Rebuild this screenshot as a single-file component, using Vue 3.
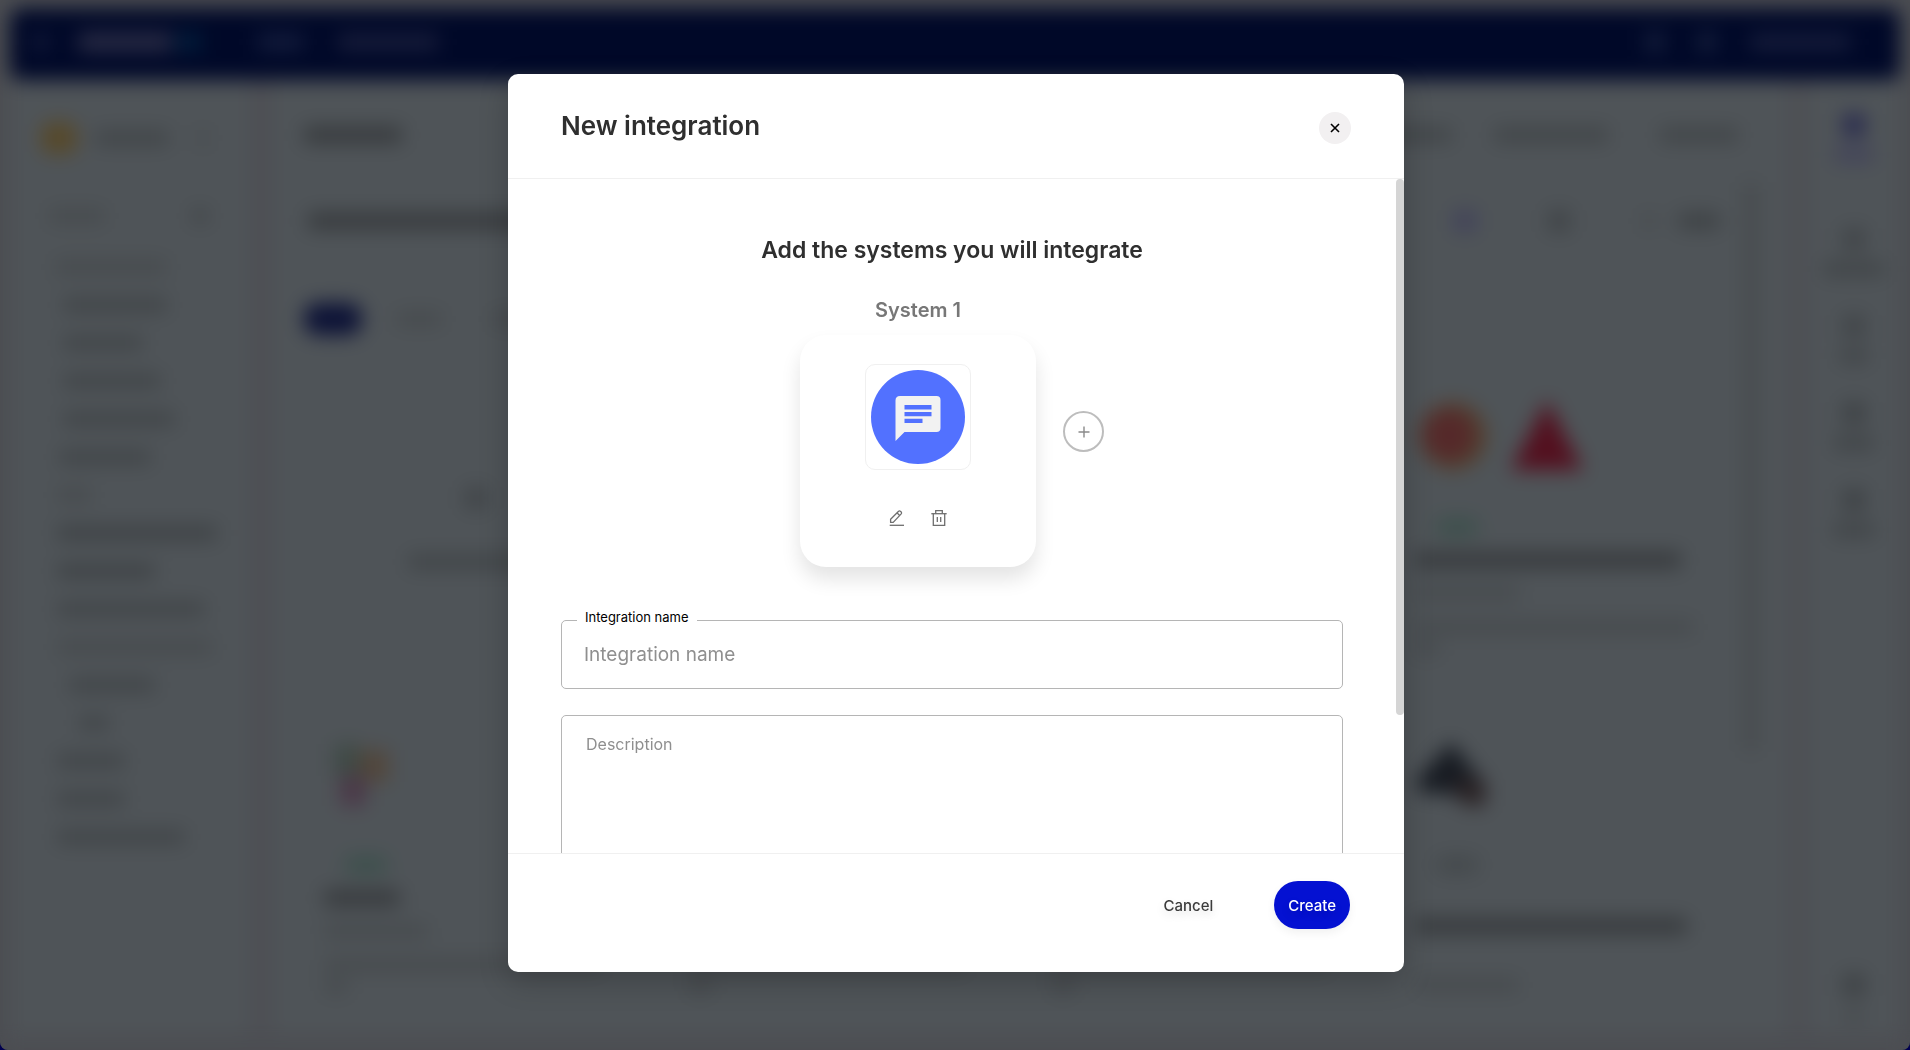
<script setup>
import { ref } from 'vue'

const name = ref('')
const description = ref('')

// Sidebar placeholder rows: indent, width, tone
const menu = [
  { x: 14, w: 112, t: 'soft' },
  { x: 22, w: 104, t: 'mid' },
  { x: 22, w: 80, t: 'mid' },
  { x: 22, w: 98, t: 'mid' },
  { x: 22, w: 112, t: 'mid' },
  { x: 18, w: 92, t: 'mid' },
  { x: 16, w: 34, t: 'soft' },
  { x: 16, w: 160, t: 'dark' },
  { x: 16, w: 98, t: 'dark' },
  { x: 16, w: 148, t: 'mid' },
  { x: 16, w: 156, t: 'soft' },
  { x: 28, w: 86, t: 'mid' },
  { x: 38, w: 30, t: 'mid' },
  { x: 16, w: 68, t: 'mid' },
  { x: 16, w: 68, t: 'mid' },
  { x: 16, w: 128, t: 'mid' },
]

const rail = [
  { w: 40, t: 'blue' },
  { w: 62, t: 'mid' },
  { w: 28, t: 'mid' },
  { w: 40, t: 'dark' },
  { w: 42, t: 'dark' },
]

const cards = [
  { kind: 'blank' },
  { kind: 'item', art: 'none', tag: 'green', title: 240 },
  { kind: 'item', art: 'none', tag: 'green', title: 240 },
  { kind: 'item', art: 'alerts', tag: 'green', title: 266 },
  { kind: 'item', art: 'petals', tag: 'green', title: 76 },
  { kind: 'item', art: 'none', tag: 'green', title: 200 },
  { kind: 'item', art: 'none', tag: 'green', title: 200 },
  { kind: 'item roomy', art: 'bird', tag: 'grey', title: 272 },
]
</script>

<template>
  <div class="app">
    <div class="backdrop" aria-hidden="true">
      <div class="scene">
        <div class="topbar">
          <i class="dot"></i>
          <i class="logo"></i>
          <i class="logo-mark"></i>
          <i class="nav-item"></i>
          <i class="nav-item wide"></i>
          <span class="grow"></span>
          <i class="nav-icon"></i>
          <i class="nav-icon"></i>
          <i class="nav-item user"></i>
        </div>
        <div class="columns">
          <div class="panel sidebar">
            <div class="workspace">
              <i class="avatar"></i>
              <i class="bar mid workspace-name"></i>
              <i class="bar soft chevron"></i>
            </div>
            <div class="search">
              <i class="bar soft search-text"></i>
              <i class="bar mid search-icon"></i>
            </div>
            <div class="menu">
              <div v-for="(m, i) in menu" :key="i" class="menu-row">
                <i class="bar" :class="m.t" :style="{ width: m.w + 'px', marginLeft: m.x + 'px' }"></i>
              </div>
            </div>
          </div>

          <div class="panel main">
            <div class="heading">
              <i class="bar strong heading-title"></i>
              <span class="grow"></span>
              <i class="bar mid tab"></i>
              <i class="bar mid tab long"></i>
              <i class="bar mid tab"></i>
            </div>
            <div class="toolbar">
              <i class="bar strong toolbar-title"></i>
              <span class="grow"></span>
              <i class="bar violet square"></i>
              <i class="bar mid square filter"></i>
              <i class="bar soft square"></i>
              <i class="bar dark action"></i>
            </div>
            <div class="chips">
              <i class="chip"></i>
              <i class="bar soft chip-text"></i>
              <i class="bar soft chip-text"></i>
            </div>
            <div class="cards">
              <div v-for="(c, i) in cards" :key="i" class="card" :class="c.kind">
                <template v-if="c.kind === 'blank'">
                  <i class="bar mid square"></i>
                  <i class="bar mid blank-text"></i>
                </template>
                <template v-else>
                  <div class="art">
                    <svg v-if="c.art === 'alerts'" width="176" height="68" viewBox="0 0 176 68">
                      <circle cx="38" cy="32" r="34" fill="#53412e" />
                      <circle cx="34" cy="31" r="26" fill="#55292a" />
                      <path d="M132 -4L168 66H96Z" fill="#53101f" />
                    </svg>
                    <svg v-else-if="c.art === 'petals'" width="80" height="68" viewBox="0 0 80 68">
                      <path d="M10 2H36V34H10Z" fill="#3f4a46" />
                      <path d="M36 8H64V40H36Z" fill="#52463a" />
                      <path d="M16 34H42V64H16Z" fill="#4b3848" />
                    </svg>
                    <svg v-else-if="c.art === 'bird'" width="80" height="68" viewBox="0 0 80 68">
                      <path d="M2 38L36 0L72 46L60 62L34 52L4 50Z" fill="#171b22" />
                      <path d="M36 38H70V64H50Z" fill="#2a2224" />
                    </svg>
                  </div>
                  <i class="tag" :class="c.tag"></i>
                  <i class="bar strong card-title" :style="{ width: c.title + 'px' }"></i>
                  <i class="bar soft card-sub"></i>
                  <i class="bar soft card-text"></i>
                  <i class="bar soft card-end"></i>
                </template>
              </div>
            </div>
          </div>
          <div class="gutter"><i></i></div>
          <div class="panel rail">
            <div v-for="(r, i) in rail" :key="i" class="rail-item">
              <i class="bar square" :class="r.t"></i>
              <i class="bar" :class="r.t === 'blue' ? 'violet' : 'mid'" :style="{ width: r.w + 'px' }"></i>
            </div>
            <span class="grow"></span>
            <div class="rail-item last">
              <i class="bar dark square"></i>
              <i class="bar soft rail-foot"></i>
            </div>
          </div>
        </div>
      </div>
    </div>

    <div class="overlay">
      <section class="modal" role="dialog" aria-modal="true" aria-labelledby="modal-title">
        <header class="modal-header">
          <h1 id="modal-title">New integration</h1>
          <button type="button" class="close" aria-label="Close">
            <svg width="10" height="10" viewBox="0 0 10 10">
              <path d="M1 1L9 9M9 1L1 9" stroke="#000" stroke-width="1.6" fill="none" />
            </svg>
          </button>
        </header>

        <div class="modal-body">
          <div class="content">
            <h2>Add the systems you will integrate</h2>
            <div class="systems">
              <div class="system">
                <h3>System 1</h3>
                <div class="system-card">
                  <div class="thumb">
                    <svg width="94" height="94" viewBox="0 0 94 94">
                      <circle cx="47" cy="47" r="47" fill="#5271ff" />
                      <path
                        d="M29 26H65.500Q69.500 26 69.500 30V58Q69.500 62 65.500 62H33.500L24.500 71V30.500Q24.500 26 29 26Z"
                        fill="#f2f2f2"
                      />
                      <path d="M33.500 35H60.500V39.500H33.500ZM33.500 42H60.500V46.300H33.500ZM33.500 48.700H51.500V53H33.500Z" fill="#5271ff" />
                    </svg>
                  </div>
                  <div class="tools">
                    <button type="button" class="tool" aria-label="Edit system">
                      <svg width="16" height="16" viewBox="0 0 16 16" fill="none" stroke="#6e6e6e" stroke-width="1.3">
                        <path d="M0.700 15.300H15" />
                        <path d="M1.600 12.400V9.300L9.600 1.300Q10.600 0.500 11.600 1.400L12.200 2Q13 3 12.200 3.900L4.200 12.400Z" stroke-linejoin="round" />
                        <path d="M8.200 3L10.700 5.500" />
                      </svg>
                    </button>
                    <button type="button" class="tool" aria-label="Remove system">
                      <svg width="16" height="16" viewBox="0 0 16 16" fill="none" stroke="#6e6e6e" stroke-width="1.300">
                        <path d="M0.300 3.700H15.700" />
                        <path d="M4.700 3.700V0.700H11.300V3.700" />
                        <path d="M2.300 3.700V15.300H13.700V3.700" />
                        <path d="M6.300 7V12M9.700 7V12" />
                      </svg>
                    </button>
                  </div>
                </div>
              </div>
              <button type="button" class="add" aria-label="Add system">
                <svg width="12" height="12" viewBox="0 0 12 12">
                  <path d="M6 0.500V11.500M0.500 6H11.500" stroke="#8a8a8a" stroke-width="1.400" fill="none" />
                </svg>
              </button>
            </div>

            <div class="field">
              <label for="integration-name">Integration name</label>
              <input id="integration-name" v-model="name" type="text" placeholder="Integration name" />
            </div>
            <textarea v-model="description" aria-label="Description" placeholder="Description"></textarea>
          </div>
          <div class="track"><div class="thumb-bar"></div></div>
        </div>

        <footer class="modal-footer">
          <button type="button" class="cancel">Cancel</button>
          <button type="button" class="create">Create</button>
        </footer>
      </section>
    </div>
  </div>
</template>

<style>
body {
  background: #00004f;
}
</style>

<style scoped>
* {
  box-sizing: border-box;
}
.app {
  min-height: 100vh;
  font-family: Inter, "Liberation Sans", sans-serif;
  color: #2f2f2f;
}
button {
  font-family: inherit;
  border: 0;
  padding: 0;
  background: none;
  cursor: pointer;
}
h1,
h2,
h3 {
  margin: 0;
  font-weight: 600;
}
svg {
  display: block;
  overflow: visible;
}
.grow {
  flex: 1;
}

/* Blurred page behind the dialog */
.backdrop {
  position: fixed;
  inset: 0;
  overflow: hidden;
  border-radius: 0 0 8px 8px;
  background: #4b4d51;
}
.scene {
  height: 100%;
  padding: 8px 10px 0;
  display: flex;
  flex-direction: column;
  background: #4d4f54;
  filter: blur(10px);
}
.scene i {
  display: block;
  flex: none;
}
.topbar {
  height: 72px;
  flex: none;
  border-radius: 10px;
  background: #000828;
  display: flex;
  align-items: center;
  padding: 0 50px 4px 24px;
}
.dot {
  width: 14px;
  height: 14px;
  background: #1a2140;
}
.logo {
  width: 94px;
  height: 18px;
  margin-left: 30px;
  background: #2b2d46;
}
.logo-mark {
  width: 26px;
  height: 18px;
  margin-left: 4px;
  background: #021e3c;
}
.nav-item {
  width: 46px;
  height: 14px;
  margin-left: 56px;
  background: #172040;
}
.nav-item.wide {
  width: 100px;
  margin-left: 34px;
  background: #1c213e;
}
.nav-item.user {
  width: 100px;
  margin-left: 0;
  background: #1a203e;
}
.nav-icon {
  width: 18px;
  height: 18px;
  margin-right: 34px;
  background: #17213e;
}
.columns {
  flex: 1;
  min-height: 0;
  display: flex;
  padding-bottom: 16px;
}
.panel {
  background: #4f5458;
  border-radius: 10px;
}
.bar {
  height: 14px;
  border-radius: 4px;
}
.soft {
  background: #464a4d;
}
.mid {
  background: #404447;
}
.dark {
  background: #3d4144;
}
.strong {
  background: #36393c;
}
.blue {
  background: #26284e;
}
.violet {
  background: #41425a;
}
.square {
  width: 22px;
  height: 22px;
}
.sidebar {
  width: 240px;
  flex: none;
  margin-right: 22px;
  padding: 42px 20px 0 31px;
}
.workspace {
  height: 32px;
  display: flex;
  align-items: center;
}
.avatar {
  width: 36px;
  height: 32px;
  border-radius: 10px;
  background: #57492a;
}
.workspace-name {
  width: 74px;
  margin-left: 18px;
}
.chevron {
  width: 12px;
  margin-left: 28px;
}
.search {
  height: 20px;
  margin-top: 52px;
  display: flex;
  align-items: center;
  justify-content: space-between;
  padding: 0 22px 0 8px;
}
.search-text {
  width: 56px;
}
.search-icon {
  width: 16px;
}
.menu {
  margin-top: 22px;
}
.menu-row {
  height: 38px;
  display: flex;
  align-items: center;
}
.main {
  flex: 1;
  min-width: 0;
  overflow: hidden;
  padding: 46px 50px 0 32px;
}
.heading,
.toolbar,
.chips {
  display: flex;
  align-items: center;
  height: 18px;
}
.heading-title {
  width: 98px;
  height: 16px;
}
.tab {
  width: 78px;
  margin-left: 52px;
}
.tab.long {
  width: 114px;
  margin-left: 42px;
}
.toolbar {
  margin-top: 68px;
  padding: 0 18px 0 4px;
}
.toolbar-title {
  width: 220px;
  height: 16px;
}
.filter {
  margin-left: 72px;
}
.toolbar .soft {
  width: 14px;
  height: 14px;
  margin-left: 72px;
}
.action {
  width: 42px;
  height: 16px;
  margin-left: 22px;
}
.chips {
  margin-top: 80px;
}
.chip {
  width: 58px;
  height: 32px;
  border-radius: 14px;
  background: #0c1236;
}
.chip-text {
  width: 46px;
  margin-left: 34px;
}
.chip-text + .chip-text {
  margin-left: 50px;
}
.cards {
  margin-top: 42px;
  display: grid;
  grid-template-columns: repeat(4, minmax(0, 1fr));
  column-gap: 20px;
  row-gap: 18px;
}
.card {
  height: 320px;
  padding: 34px 20px 0;
  border-radius: 16px;
}
.card.blank {
  border: 1px solid #4b4d53;
  display: flex;
  flex-direction: column;
  align-items: center;
  padding-top: 116px;
}
.blank-text {
  width: 136px;
  margin-top: 46px;
}
.art {
  height: 68px;
}
.tag {
  width: 44px;
  height: 18px;
  margin: 46px 0 0 20px;
  border-radius: 8px;
}
.tag.green {
  background: #3c504c;
}
.tag.grey {
  background: #44494c;
}
.card-title {
  height: 16px;
  margin-top: 16px;
}
.card-sub {
  width: 104px;
  margin-top: 18px;
}
.card-text {
  width: 92%;
  margin-top: 20px;
}
.card-end {
  width: 24px;
  margin-top: 8px;
}
.roomy .card-title,
.roomy .card-sub {
  margin-top: 44px;
}
.roomy .card-text,
.roomy .card-end {
  visibility: hidden;
}
.gutter {
  width: 20px;
  flex: none;
  margin-left: -44px;
  margin-right: 44px;
  padding-top: 102px;
}
.gutter i {
  width: 14px;
  height: 570px;
  border-radius: 5px;
  background: #474b4e;
}
.rail {
  width: 92px;
  flex: none;
  display: flex;
  flex-direction: column;
  align-items: center;
  padding-top: 34px;
}
.rail-item {
  height: 87px;
  display: flex;
  flex-direction: column;
  align-items: center;
  gap: 12px;
}
.rail-item:first-child {
  height: 114px;
}
.rail-item.last {
  height: 60px;
}
.rail-foot {
  width: 18px;
}

/* Dialog */
.overlay {
  position: relative;
  height: 100vh;
  padding: 74px 20px 78px 22px;
  display: flex;
  justify-content: center;
}
.modal {
  width: 100%;
  max-width: 896px;
  display: flex;
  flex-direction: column;
  overflow: hidden;
  border-radius: 10px;
  background: #fff;
  box-shadow: 0 10px 30px rgba(0, 0, 0, 0.2);
}
.modal-header {
  flex: none;
  display: flex;
  align-items: flex-start;
  justify-content: space-between;
  padding: 34px 53px;
  border-bottom: 1px solid #f0f0f0;
}
h1 {
  font-size: 26px;
  line-height: 36px;
}
.close {
  width: 32px;
  height: 32px;
  margin-top: 4px;
  border-radius: 50%;
  background: #f2f0f1;
  display: flex;
  align-items: center;
  justify-content: center;
}
.modal-body {
  flex: 1;
  min-height: 0;
  display: flex;
}
.content {
  flex: 1;
  min-width: 0;
  overflow-y: auto;
  scrollbar-width: none;
  padding: 55px 53px 0;
}
.track {
  width: 8px;
  flex: none;
}
.thumb-bar {
  height: calc(80% - 3px);
  border-radius: 4px;
  background: #d5d5d5;
}
h2 {
  font-size: 23px;
  line-height: 32px;
  text-align: center;
}
.systems {
  margin-top: 30px;
  display: flex;
  align-items: center;
  justify-content: center;
  gap: 27px;
}
.system {
  display: flex;
  flex-direction: column;
  align-items: center;
}
h3 {
  font-size: 20px;
  line-height: 28px;
  color: #777;
}
.system-card {
  width: 236px;
  height: 232px;
  margin-top: 11px;
  padding-top: 29px;
  display: flex;
  flex-direction: column;
  align-items: center;
  border-radius: 26px;
  background: #fff;
  box-shadow: 0 12px 20px rgba(0, 0, 0, 0.11);
}
.thumb {
  padding: 5px;
  border: 1px solid #f0f0f0;
  border-radius: 10px;
}
.tools {
  margin-top: 40px;
  display: flex;
  gap: 26px;
}
.tool {
  width: 16px;
  height: 16px;
}
.add {
  width: 41px;
  height: 41px;
  border: 2px solid #bdbdbd;
  border-radius: 50%;
  display: flex;
  align-items: center;
  justify-content: center;
}
.field {
  position: relative;
  margin-top: 53px;
}
.field label {
  position: absolute;
  top: -13px;
  left: 16px;
  padding: 0 8px;
  background: #fff;
  color: #000;
  font-size: 13px;
  line-height: 20px;
}
input,
textarea {
  display: block;
  width: 100%;
  margin: 0;
  border: 1px solid #b5b5b5;
  border-radius: 5px;
  background: #fff;
  color: #2f2f2f;
  font-family: inherit;
  outline: none;
}
input {
  height: 69px;
  padding: 0 22px;
  font-size: 19px;
}
textarea {
  height: 264px;
  margin-top: 26px;
  padding: 17px 24px;
  font-size: 16px;
  line-height: 22px;
  resize: none;
}
input::placeholder,
textarea::placeholder {
  color: #8f8f8f;
  opacity: 1;
}
.modal-footer {
  flex: none;
  height: 119px;
  padding: 27px 54px 0;
  border-top: 1px solid #f0f0f0;
  display: flex;
  align-items: flex-start;
  justify-content: flex-end;
  gap: 47px;
}
.cancel,
.create {
  height: 48px;
  padding: 0 14px;
  border-radius: 24px;
  font-size: 15px;
  font-weight: 500;
  color: #3c3c3c;
  text-shadow: 0 4px 10px rgba(0, 0, 0, 0.15);
}
.create {
  background: #0411d2;
  color: #fff;
  box-shadow: 0 4px 10px rgba(0, 0, 0, 0.06);
}
</style>
